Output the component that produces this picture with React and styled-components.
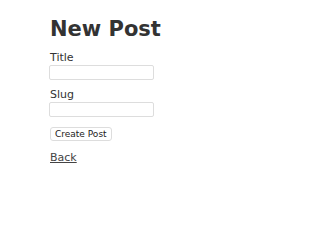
import React from 'react';
import styled, { createGlobalStyle } from 'styled-components';

const GlobalStyle = createGlobalStyle`
  html, body {
    margin: 0;
    padding: 0;
    background: #fff;
  }
  body {
    font-family: "DejaVu Sans", Verdana, sans-serif;
    color: #333;
  }
`;

const Page = styled.div`
  padding: 16px 0 0 50px;
`;

const Heading = styled.h1`
  margin: 0 0 9px;
  font-size: 21px;
  font-weight: bold;
  line-height: 26px;
  color: #333;
`;

const Form = styled.form`
  display: flex;
  flex-direction: column;
  align-items: flex-start;
`;

const Label = styled.label`
  font-size: 11px;
  line-height: 13px;
  color: #333;
`;

const Input = styled.input`
  box-sizing: border-box;
  width: 105px;
  height: 15px;
  margin: 1px 0 8px -1px;
  border: 1px solid #ddd;
  border-radius: 2px;
  padding: 0 3px;
`;

const Button = styled.button`
  margin: 2px 0 10px;
  padding: 1px 4px;
  font-family: "DejaVu Sans", Verdana, sans-serif;
  font-size: 9px;
  color: #222;
  background: #fff;
  border: 1px solid #ddd;
  border-radius: 3px;
`;

const BackLink = styled.a`
  font-size: 11px;
  color: #444;
  text-decoration: underline;
`;

export default function App() {
  return (
    <>
      <GlobalStyle />
      <Page>
        <Heading>New Post</Heading>
        <Form onSubmit={e => e.preventDefault()}>
          <Label>Title</Label>
          <Input type="text" />
          <Label>Slug</Label>
          <Input type="text" />
          <Button type="submit">Create Post</Button>
          <BackLink href="#">Back</BackLink>
        </Form>
      </Page>
    </>
  );
}
